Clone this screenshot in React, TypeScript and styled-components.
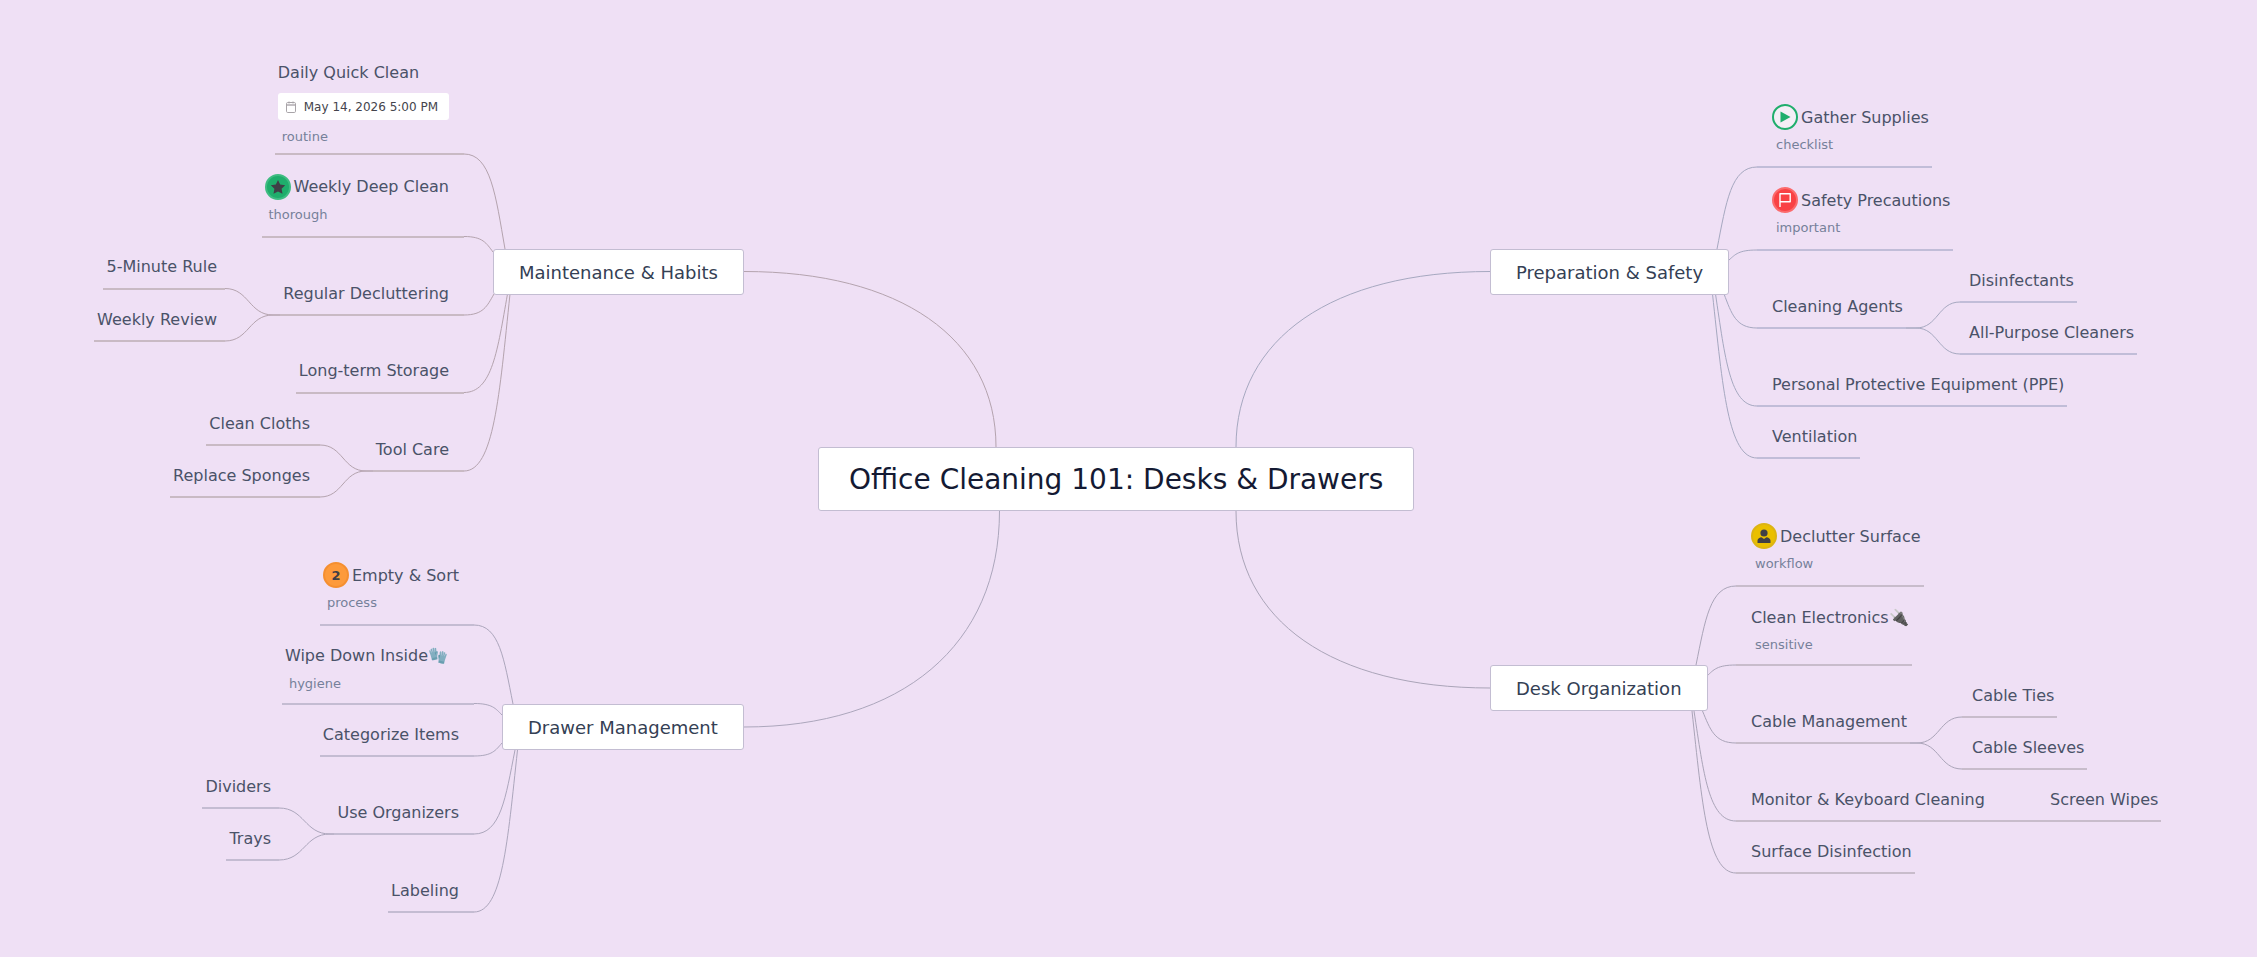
import React from 'react';
import styled, { createGlobalStyle } from 'styled-components';

const W = 2257;
const H = 957;

const GlobalStyle = createGlobalStyle`
  html, body {
    margin: 0;
    padding: 0;
    background: #efe0f5;
  }
`;

const Canvas = styled.div`
  position: relative;
  width: ${W}px;
  height: ${H}px;
  overflow: hidden;
  background: #efe0f5;
  font-family: "DejaVu Sans", sans-serif;
`;

const Wires = styled.svg`
  position: absolute;
  inset: 0;
  fill: none;
`;

const Box = styled.div<{ $x: number; $y: number; $h: number; $pad: number; $size: number; $color: string }>`
  position: absolute;
  left: ${(p) => p.$x}px;
  top: ${(p) => p.$y}px;
  height: ${(p) => p.$h}px;
  padding: 0 ${(p) => p.$pad}px;
  box-sizing: border-box;
  display: flex;
  align-items: center;
  background: #fff;
  border: 1.5px solid #c3bdd2;
  border-radius: 3px;
  white-space: nowrap;
  font-size: ${(p) => p.$size}px;
  color: ${(p) => p.$color};
`;

const Topic = styled.div<{ $side: 'left' | 'right'; $x: number; $y: number; $lead: number; $line: string; $end: number }>`
  position: absolute;
  ${(p) => (p.$side === 'left' ? `right: ${W - p.$x}px;` : `left: ${p.$x}px;`)}
  bottom: ${(p) => H - p.$y - 1}px;
  display: flex;
  flex-direction: column;
  align-items: flex-start;
  padding-bottom: ${(p) => p.$end}px;
  padding-left: ${(p) => (p.$side === 'left' ? 3 : p.$lead)}px;
  padding-right: ${(p) => (p.$side === 'left' ? p.$lead : 3)}px;
  border-bottom: 2px solid ${(p) => p.$line};
  white-space: nowrap;
`;

const Title = styled.div`
  display: flex;
  align-items: center;
  gap: 3px;
  height: 26px;
  font-size: 16px;
  color: #4a5268;
`;

const DateCard = styled.div`
  display: flex;
  align-items: center;
  gap: 8px;
  height: 27px;
  margin-top: 8px;
  padding: 0 11px 0 8px;
  background: #fff;
  border-radius: 3px;
  font-size: 12px;
  color: #44444c;
`;

const Tag = styled.div<{ $gap: number }>`
  margin-top: ${(p) => p.$gap}px;
  padding-left: 4px;
  line-height: 16px;
  font-size: 13px;
  color: #76809a;
`;

const Badge = styled.span<{ $fill: string; $ring: string }>`
  display: flex;
  align-items: center;
  justify-content: center;
  flex: none;
  width: 26px;
  height: 26px;
  box-sizing: border-box;
  border-radius: 50%;
  background: ${(p) => p.$fill};
  border: 2px solid ${(p) => p.$ring};
  font-size: 13px;
  font-weight: 700;
  color: #3f3f46;
`;

const Star = () => (
  <svg width="16" height="16" viewBox="0 0 16 16">
    <path d="M8 1l2.2 4.6 5 .7-3.6 3.5.9 5L8 12.4l-4.5 2.4.9-5L.8 6.3l5-.7z" fill="#3f3f46" />
  </svg>
);

const Play = () => (
  <svg width="14" height="14" viewBox="0 0 14 14">
    <path d="M2.5 1.5v11l10-5.5z" fill="#1fae6c" />
  </svg>
);

const Flag = () => (
  <svg width="16" height="16" viewBox="0 0 16 16" fill="none" stroke="#fff" strokeWidth="1.4">
    <path d="M3 15V1.8h10.2v8H3" strokeLinejoin="round" />
  </svg>
);

const Person = () => (
  <svg width="16" height="16" viewBox="0 0 16 16" fill="#3f3f46">
    <circle cx="8" cy="5" r="3.6" />
    <path d="M1.5 15v-2.6c0-2 2.4-3 4-3.2L8 11l2.5-1.8c1.6.2 4 1.2 4 3.2V15z" />
  </svg>
);

const CalendarIcon = () => (
  <svg width="10" height="12" viewBox="0 0 10 12" fill="none">
    <rect x="0.5" y="1.5" width="9" height="10" rx="1.2" stroke="#a8a4a8" />
    <rect x="1" y="3" width="8" height="2" fill="#c4c0c4" />
    <path d="M3 .5v2M7 .5v2" stroke="#a8a4a8" />
  </svg>
);

const badges: Record<string, React.ReactNode> = {
  star: (
    <Badge $fill="#1fae6c" $ring="#3fbc82">
      <Star />
    </Badge>
  ),
  play: (
    <Badge $fill="#f4eef6" $ring="#1fae6c">
      <Play />
    </Badge>
  ),
  flag: (
    <Badge $fill="#f94144" $ring="#fb6a6c">
      <Flag />
    </Badge>
  ),
  person: (
    <Badge $fill="#eabf00" $ring="#dcb414">
      <Person />
    </Badge>
  ),
  two: (
    <Badge $fill="#fd9a3b" $ring="#f58f30">
      2
    </Badge>
  ),
};

type TopicData = {
  text: string;
  side: 'left' | 'right';
  x: number;
  y: number;
  lead: number;
  line: string;
  icon?: string;
  tag?: string;
  date?: string;
  gap?: number;
  end?: number;
};

const ROSE = '#c9bac4';
const BLUE = '#c1bdd8';
const MAUVE = '#c8bccb';
const LILAC = '#c4bcd2';

const topics: TopicData[] = [
  { text: 'Daily Quick Clean', side: 'left', x: 464, y: 154, lead: 15, line: ROSE, date: 'May 14, 2026 5:00 PM', tag: 'routine', gap: 9, end: 8 },
  { text: 'Weekly Deep Clean', side: 'left', x: 464, y: 236.5, lead: 15, line: ROSE, icon: 'star', tag: 'thorough', gap: 7, end: 13 },
  { text: 'Regular Decluttering', side: 'left', x: 464, y: 315, lead: 15, line: ROSE },
  { text: '5-Minute Rule', side: 'left', x: 225, y: 288.5, lead: 8, line: ROSE },
  { text: 'Weekly Review', side: 'left', x: 225, y: 341, lead: 8, line: ROSE },
  { text: 'Long-term Storage', side: 'left', x: 464, y: 392.5, lead: 15, line: ROSE },
  { text: 'Tool Care', side: 'left', x: 464, y: 471, lead: 15, line: ROSE },
  { text: 'Clean Cloths', side: 'left', x: 320, y: 445, lead: 10, line: ROSE },
  { text: 'Replace Sponges', side: 'left', x: 320, y: 497, lead: 10, line: ROSE },

  { text: 'Empty & Sort', side: 'left', x: 474, y: 625, lead: 15, line: LILAC, icon: 'two', tag: 'process', gap: 7, end: 13 },
  { text: 'Wipe Down Inside🧤', side: 'left', x: 474, y: 703.5, lead: 26, line: LILAC, tag: 'hygiene', gap: 7, end: 11 },
  { text: 'Categorize Items', side: 'left', x: 474, y: 756, lead: 15, line: LILAC },
  { text: 'Use Organizers', side: 'left', x: 474, y: 834, lead: 15, line: LILAC },
  { text: 'Dividers', side: 'left', x: 279, y: 808, lead: 8, line: LILAC },
  { text: 'Trays', side: 'left', x: 279, y: 860, lead: 8, line: LILAC },
  { text: 'Labeling', side: 'left', x: 474, y: 912, lead: 15, line: LILAC },

  { text: 'Gather Supplies', side: 'right', x: 1757, y: 167, lead: 15, line: BLUE, icon: 'play', tag: 'checklist', gap: 7, end: 13 },
  { text: 'Safety Precautions', side: 'right', x: 1757, y: 250, lead: 15, line: BLUE, icon: 'flag', tag: 'important', gap: 7, end: 13 },
  { text: 'Cleaning Agents', side: 'right', x: 1757, y: 328, lead: 15, line: BLUE },
  { text: 'Disinfectants', side: 'right', x: 1960, y: 302, lead: 9, line: BLUE },
  { text: 'All-Purpose Cleaners', side: 'right', x: 1960, y: 354, lead: 9, line: BLUE },
  { text: 'Personal Protective Equipment (PPE)', side: 'right', x: 1757, y: 406, lead: 15, line: BLUE },
  { text: 'Ventilation', side: 'right', x: 1757, y: 458, lead: 15, line: BLUE },

  { text: 'Declutter Surface', side: 'right', x: 1736, y: 586, lead: 15, line: MAUVE, icon: 'person', tag: 'workflow', gap: 7, end: 13 },
  { text: 'Clean Electronics🔌', side: 'right', x: 1736, y: 665, lead: 15, line: MAUVE, tag: 'sensitive', gap: 7, end: 11 },
  { text: 'Cable Management', side: 'right', x: 1736, y: 743, lead: 15, line: MAUVE },
  { text: 'Cable Ties', side: 'right', x: 1962, y: 717, lead: 10, line: MAUVE },
  { text: 'Cable Sleeves', side: 'right', x: 1962, y: 769, lead: 10, line: MAUVE },
  { text: 'Monitor & Keyboard Cleaning', side: 'right', x: 1736, y: 821, lead: 15, line: MAUVE },
  { text: 'Screen Wipes', side: 'right', x: 1988, y: 821, lead: 62, line: MAUVE },
  { text: 'Surface Disinfection', side: 'right', x: 1736, y: 873, lead: 15, line: MAUVE },
];

// big curve out of the root: flat at the branch box, upright at the root
const rootCurve = (x0: number, y0: number, x1: number, y1: number) => {
  const k = 0.62;
  return `M${x0} ${y0}C${x0 + (x1 - x0) * k} ${y0} ${x1} ${y1 - (y1 - y0) * k} ${x1} ${y1}`;
};

// from the end of a topic underline up to its branch box
const branch = (x0: number, y0: number, x1: number, y1: number) =>
  `M${x0} ${y0}C${x0 + (x1 - x0) * 0.65} ${y0} ${x0 + (x1 - x0) * 0.77} ${y0 + (y1 - y0) * 0.43} ${x1} ${y1}`;

// S shape between a sub topic and its parent underline
const twig = (x0: number, y0: number, x1: number, y1: number, stub: number) => {
  const mx = (x0 + x1) / 2;
  return `M${x0} ${y0}C${mx} ${y0} ${mx} ${y1} ${x1} ${y1}H${stub}`;
};

const wires: { d: string; color: string }[] = [
  { d: rootCurve(744, 271.5, 996, 447), color: '#b4a3ae' },
  { d: rootCurve(1490, 271.5, 1236, 447), color: '#a6a8c0' },
  { d: rootCurve(1490, 688, 1236, 511), color: '#aaa4b8' },
  { d: rootCurve(744, 727, 999.5, 511), color: '#aca6bc' },

  { d: branch(464, 154, 505, 249), color: '#b4a3ae' },
  { d: branch(464, 236.5, 493, 252), color: '#b4a3ae' },
  { d: branch(464, 315, 494, 294), color: '#b4a3ae' },
  { d: branch(464, 392.5, 507.5, 294), color: '#b4a3ae' },
  { d: branch(464, 471, 510, 294), color: '#b4a3ae' },
  { d: twig(225, 288.5, 273, 315, 282), color: '#b4a3ae' },
  { d: twig(225, 341, 273, 315, 282), color: '#b4a3ae' },
  { d: twig(320, 445, 366, 471, 374), color: '#b4a3ae' },
  { d: twig(320, 497, 366, 471, 374), color: '#b4a3ae' },

  { d: branch(474, 625, 513, 704), color: '#aca6bc' },
  { d: branch(474, 703.5, 502, 715), color: '#aca6bc' },
  { d: branch(474, 756, 502, 743), color: '#aca6bc' },
  { d: branch(474, 834, 515, 750), color: '#aca6bc' },
  { d: branch(474, 912, 517.5, 750), color: '#aca6bc' },
  { d: twig(279, 808, 330, 834, 336), color: '#aca6bc' },
  { d: twig(279, 860, 330, 834, 336), color: '#aca6bc' },

  { d: branch(1757, 167, 1717, 249), color: '#a6a8c0' },
  { d: branch(1757, 250, 1729, 260), color: '#a6a8c0' },
  { d: branch(1757, 328, 1724, 294), color: '#a6a8c0' },
  { d: branch(1757, 406, 1715.5, 294), color: '#a6a8c0' },
  { d: branch(1757, 458, 1712.5, 294), color: '#a6a8c0' },
  { d: twig(1960, 302, 1916, 328, 1905), color: '#a6a8c0' },
  { d: twig(1960, 354, 1916, 328, 1905), color: '#a6a8c0' },

  { d: branch(1736, 586, 1696, 665), color: '#aaa4b8' },
  { d: branch(1736, 665, 1707, 676), color: '#aaa4b8' },
  { d: branch(1736, 743, 1702.5, 711), color: '#aaa4b8' },
  { d: branch(1736, 821, 1694, 711), color: '#aaa4b8' },
  { d: branch(1736, 873, 1692, 711), color: '#aaa4b8' },
  { d: twig(1962, 717, 1917, 743, 1910), color: '#aaa4b8' },
  { d: twig(1962, 769, 1917, 743, 1910), color: '#aaa4b8' },
];

export default function App() {
  return (
    <Canvas>
      <GlobalStyle />
      <Wires width={W} height={H}>
        {wires.map((w, i) => (
          <path key={i} d={w.d} stroke={w.color} strokeWidth="1" />
        ))}
      </Wires>

      <Box $x={818} $y={447} $h={64} $pad={30} $size={28} $color="#141a33">
        Office Cleaning 101: Desks &amp; Drawers
      </Box>
      <Box $x={493} $y={249} $h={46} $pad={25} $size={18} $color="#344054">
        Maintenance &amp; Habits
      </Box>
      <Box $x={1490} $y={249} $h={46} $pad={25} $size={18} $color="#344054">
        Preparation &amp; Safety
      </Box>
      <Box $x={1490} $y={665} $h={46} $pad={25} $size={18} $color="#344054">
        Desk Organization
      </Box>
      <Box $x={502} $y={704} $h={46} $pad={25} $size={18} $color="#344054">
        Drawer Management
      </Box>

      {topics.map((t) => (
        <Topic key={t.text} $side={t.side} $x={t.x} $y={t.y} $lead={t.lead} $line={t.line} $end={t.end ?? 8}>
          <Title>
            {t.icon && badges[t.icon]}
            {t.text}
          </Title>
          {t.date && (
            <DateCard>
              <CalendarIcon />
              {t.date}
            </DateCard>
          )}
          {t.tag && <Tag $gap={t.gap ?? 7}>{t.tag}</Tag>}
        </Topic>
      ))}
    </Canvas>
  );
}
